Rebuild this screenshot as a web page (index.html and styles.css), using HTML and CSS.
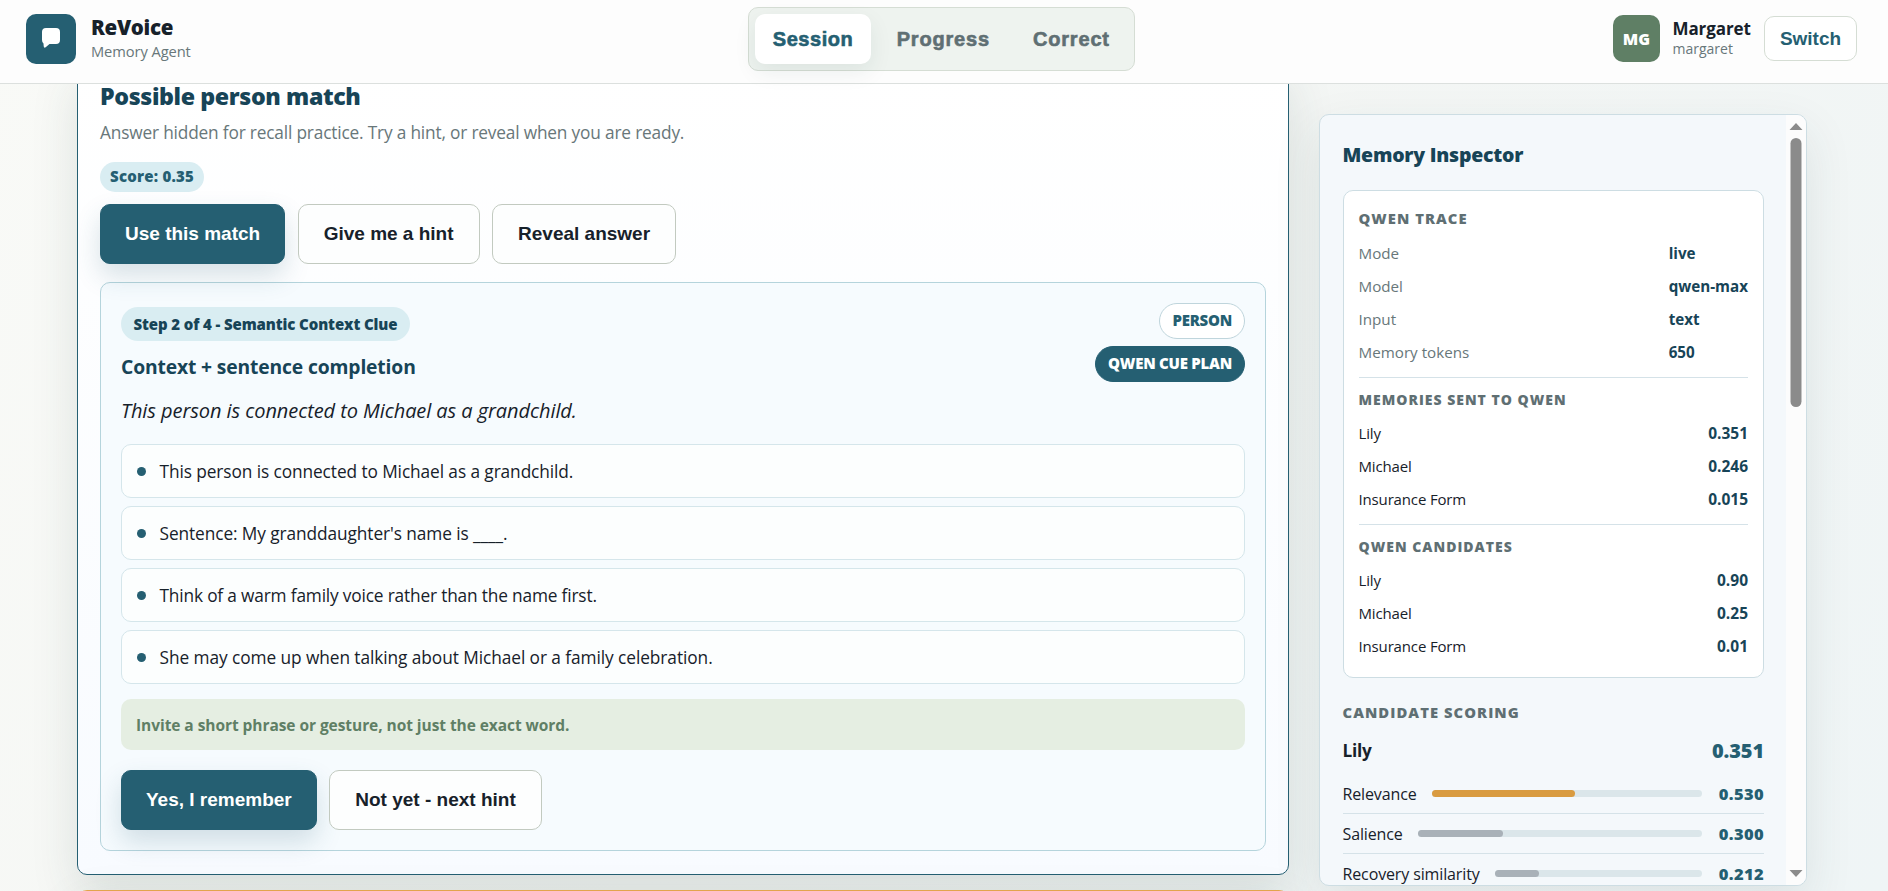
FILE: index.html
```
<!DOCTYPE html>
<html lang="en">
<head>
<meta charset="utf-8">
<title>ReVoice</title>
<link rel="stylesheet" href="styles.css">
</head>
<body>
<header class="topbar">
  <div class="brand">
    <div class="logo"><svg width="50" height="50" viewBox="0 0 50 50"><path d="M20 14h10q4 0 4 4v8q0 4-4 4h-6.500l-3.800 3.300q-1.700 1.200-2-1l-.2-2.800Q16 28.500 16 26v-8q0-4 4-4z" fill="#fff"/></svg></div>
    <div><div class="brand-name">ReVoice</div><div class="brand-sub">Memory Agent</div></div>
  </div>
  <nav class="tabs"><button class="tab active">Session</button><button class="tab">Progress</button><button class="tab">Correct</button></nav>
  <div class="user">
    <div class="avatar">MG</div>
    <div class="who"><div class="user-name">Margaret</div><div class="user-id">margaret</div></div>
    <button class="switch">Switch</button>
  </div>
</header>
<main class="page">
  <section class="main-col">
    <article class="card">
      <h2 class="title">Possible person match</h2>
      <p class="sub">Answer hidden for recall practice. Try a hint, or reveal when you are ready.</p>
      <div class="score">Score: 0.35</div>
      <div class="actions"><button class="btn primary">Use this match</button><button class="btn">Give me a hint</button><button class="btn">Reveal answer</button></div>
      <div class="cue">
        <div class="cue-head">
          <div><div class="step">Step 2 of 4 - Semantic Context Clue</div><h3 class="cue-title">Context + sentence completion</h3></div>
          <div class="tags"><span class="tag">PERSON</span><span class="tag solid">QWEN CUE PLAN</span></div>
        </div>
        <p class="quote">This person is connected to Michael as a grandchild.</p>
        <ul class="clues">
          <li>This person is connected to Michael as a grandchild.</li>
          <li>Sentence: My granddaughter's name is ____.</li>
          <li>Think of a warm family voice rather than the name first.</li>
          <li>She may come up when talking about Michael or a family celebration.</li>
        </ul>
        <p class="note">Invite a short phrase or gesture, not just the exact word.</p>
        <div class="actions"><button class="btn primary">Yes, I remember</button><button class="btn">Not yet - next hint</button></div>
      </div>
    </article>
    <article class="card next"></article>
  </section>
  <aside class="inspector">
    <div class="inspector-body">
      <h2 class="ins-title">Memory Inspector</h2>
      <div class="trace">
        <h4>QWEN TRACE</h4>
        <dl class="facts">
          <dt>Mode</dt><dd>live</dd>
          <dt>Model</dt><dd>qwen-max</dd>
          <dt>Input</dt><dd>text</dd>
          <dt>Memory tokens</dt><dd>650</dd>
        </dl>
        <div class="group"><h4>MEMORIES SENT TO QWEN</h4>
          <div class="row"><span>Lily</span><b>0.351</b></div>
          <div class="row"><span>Michael</span><b>0.246</b></div>
          <div class="row"><span>Insurance Form</span><b>0.015</b></div>
        </div>
        <div class="group"><h4>QWEN CANDIDATES</h4>
          <div class="row"><span>Lily</span><b>0.90</b></div>
          <div class="row"><span>Michael</span><b>0.25</b></div>
          <div class="row"><span>Insurance Form</span><b>0.01</b></div>
        </div>
      </div>
      <h4 class="scoring">CANDIDATE SCORING</h4>
      <div class="cand"><span>Lily</span><b>0.351</b></div>
      <div class="metric"><span>Relevance</span><div class="bar"><i class="amber" style="width:53%"></i></div><b>0.530</b></div>
      <div class="metric"><span>Salience</span><div class="bar"><i style="width:30%"></i></div><b>0.300</b></div>
      <div class="metric"><span>Recovery similarity</span><div class="bar"><i style="width:21.2%"></i></div><b>0.212</b></div>
    </div>
    <div class="scroll"><svg width="20" height="770" viewBox="0 0 20 770"><path d="M3.500 15L10 8l6.500 7zM3.500 755L10 762l6.500-7z" fill="#8b8b8b"/><rect x="4.500" y="23" width="11" height="269" rx="5.500" fill="#8b8b8b"/></svg></div>
  </aside>
</main>
</body>
</html>
```
FILE: styles.css
```
* { box-sizing: border-box; }
body { margin: 0; height: 891px; overflow: hidden; font-family: "Open Sans", "Noto Sans", sans-serif; color: #17212a; background: linear-gradient(125deg, #f9faf7 0%, #f4f6f4 50%, #eff5f6 100%); }
h2, h3, h4, p, ul, dl, dd { margin: 0; padding: 0; }
button { font-family: "Liberation Sans", Arial, sans-serif; font-weight: 700; font-size: 19px; padding: 0; border: 0; background: none; white-space: nowrap; }
.topbar { position: relative; z-index: 2; height: 84px; border-bottom: 1px solid #dce0de; background: #fdfdfd; display: grid; grid-template-columns: 1fr auto 1fr; align-items: start; padding: 7px 31px 0 26px; }
.brand { display: flex; gap: 15px; padding-top: 7px; }
.logo { width: 50px; height: 50px; border-radius: 10px; background: #255f72; overflow: hidden; }
.logo svg { display: block; }
.brand-name { font-size: 20.5px; font-weight: 800; line-height: 26px; letter-spacing: -.32px; }
.brand-sub { font-size: 14.7px; line-height: 22px; letter-spacing: -.09px; color: #68777a; }
.tabs { width: 387px; height: 64px; padding: 6px; display: flex; gap: 8px; border: 1px solid #d5ddd4; border-radius: 10px; background: #eef3ef; }
.tab { height: 50px; padding: 0 17.500px; border-radius: 10px; font-size: 20px; color: #5f6f73; -webkit-text-stroke: .6px; letter-spacing: .82px; }
.tab.active { padding: 0 17.800px; letter-spacing: .55px; background: #fff; color: #255f72; box-shadow: 0 8px 22px rgba(30, 60, 60, .08); }
.user { display: flex; justify-content: flex-end; padding-top: 8px; }
.avatar { flex: none; width: 47px; height: 47px; border-radius: 10px; background: #5f7f65; color: #fff; font-size: 16px; font-weight: 800; line-height: 48px; text-align: center; }
.who { width: 104px; padding: 2px 0 0 12.500px; }
.user-name { font-size: 17px; font-weight: 700; line-height: 24px; letter-spacing: -.1px; }
.user-id { font-size: 14px; line-height: 15px; color: #68777a; }
.switch { width: 93px; height: 45px; margin-top: 1px; border: 1px solid #d5ddd4; border-radius: 10px; background: #fff; color: #255f72; }
.page { display: flex; gap: 30px; height: 807px; padding-left: 77px; align-items: flex-start; overflow: hidden; }
.main-col { width: 1212px; margin-top: -20px; }
.card { height: 811px; padding: 20px 22px 0; border: 1px solid #255f72; border-radius: 10px; background: linear-gradient(#fff, #f8fbff); box-shadow: 0 18px 48px rgba(40, 70, 65, .13); }
.card.next { height: 60px; margin-top: 15px; border-color: #e2a44c; }
.title { font-size: 23.2px; font-weight: 800; line-height: 22px; letter-spacing: -.38px; color: #174457; }
.sub { font-size: 17.3px; line-height: 28px; letter-spacing: -.18px; margin-top: 12px; color: #68777a; }
.score { width: fit-content; height: 30px; margin: 15px 0 12px; padding: 0 10px; border-radius: 15px; background: #d9edf2; color: #255f72; font-size: 15px; font-weight: 800; line-height: 29px; letter-spacing: .22px; }
.actions { display: flex; gap: 12.500px; }
.btn { height: 60px; padding: 0 25px; border: 1px solid #c2cac0; border-radius: 10px; background: #fdfefe; color: #17212a; }
.btn.primary { padding: 0 24px; border-color: #255f72; background: #255f72; color: #fff; box-shadow: 0 12px 26px rgba(37, 95, 114, .18); }
.cue { height: 569px; margin-top: 18px; padding: 20px; border: 1px solid #b5d4dc; border-radius: 10px; background: #f6fbfe; }
.cue-head { display: flex; justify-content: space-between; height: 92px; }
.step { width: fit-content; height: 34px; margin-top: 4px; padding: 0 12.500px; border-radius: 17px; background: #d9edf2; color: #174457; font-size: 15px; font-weight: 800; line-height: 34px; letter-spacing: -.11px; }
.cue-title { font-size: 19.3px; line-height: 28px; letter-spacing: -.14px; margin-top: 12px; color: #174457; }
.tags { display: flex; flex-direction: column; align-items: flex-end; gap: 7px; }
.tag { height: 36px; padding: 0 12px; border: 1px solid #bfd5dc; border-radius: 18px; background: #fff; color: #255f72; font-size: 15px; font-weight: 800; line-height: 33px; letter-spacing: -.24px; }
.tag.solid { border-color: #255f72; background: #255f72; color: #fff; }
.quote { font-size: 20px; font-style: italic; line-height: 32px; letter-spacing: -.07px; }
.clues { list-style: none; display: grid; gap: 8px; margin-top: 17px; }
.clues li { display: flex; align-items: center; gap: 13.500px; height: 54px; padding-left: 15px; border: 1px solid #d5e6eb; border-radius: 10px; background: #fcfefe; font-size: 17.3px; letter-spacing: -.09px; }
.clues li:nth-child(3) { letter-spacing: -.17px; }
.clues li:nth-child(4) { letter-spacing: -.07px; }
.clues li::before { content: ""; width: 9px; height: 9px; border-radius: 50%; background: #255f72; }
.note { height: 51px; margin: 15px 0 20px; padding-left: 15px; border-radius: 10px; background: #e5eee2; color: #5f7f65; font-size: 15.5px; font-weight: 700; line-height: 53px; letter-spacing: -.06px; }
.inspector { width: 488px; height: 772px; margin-top: 30px; display: flex; border: 1px solid #cddde3; border-radius: 10px; background: #f4f8fb; overflow: hidden; box-shadow: 0 18px 48px rgba(40, 70, 65, .1); }
.inspector-body { width: 467px; padding: 26px 22px 0 22.500px; }
.scroll { width: 20px; background: #fcfcfc; }
.scroll svg { display: block; }
.ins-title { font-size: 19.5px; font-weight: 800; line-height: 28px; letter-spacing: -.25px; color: #174457; }
h4 { font-size: 14.8px; font-weight: 800; line-height: 20px; letter-spacing: 1.05px; color: #5f6f73; }
.trace { height: 488px; margin-top: 21px; padding: 17px 15px; border: 1px solid #cddde3; border-radius: 10px; background: #fff; }
.facts { display: grid; grid-template-columns: 1fr auto; grid-auto-rows: 33px; margin-top: 9px; font-size: 15.2px; line-height: 33px; }
.facts dt { color: #68777a; }
.facts dd { font-weight: 700; color: #174457; }
.group { border-top: 1px solid #d5e2e8; padding-top: 12px; margin-top: 8px; }
.group + .group { margin-top: 9px; padding-top: 12px; }
.group h4 { margin-bottom: 7px; font-size: 14px; letter-spacing: 1px; }
.row { display: flex; justify-content: space-between; font-size: 15px; line-height: 32.800px; letter-spacing: -.15px; }
.row b { color: #174457; font-size: 15.500px; letter-spacing: 0; }
.scoring { margin-top: 24px; }
.cand { display: flex; justify-content: space-between; align-items: center; height: 40px; font-size: 17.2px; font-weight: 700; letter-spacing: -.25px; margin: 8px 0 4px; }
.cand b { font-size: 20px; font-weight: 800; letter-spacing: -.13px; color: #255f72; }
.metric { display: flex; align-items: center; height: 40px; border-bottom: 1px solid #d5e2e8; font-size: 16px; letter-spacing: -.13px; }
.bar { flex: 1; height: 7px; margin: 0 17px 0 15px; border-radius: 4px; background: #dbe6ea; }
.bar i { display: block; height: 7px; border-radius: 4px; background: #a9b1b8; }
.bar .amber { background: #d99b40; }
.metric b { font-size: 16.5px; font-weight: 800; letter-spacing: .35px; color: #255f72; }
```
